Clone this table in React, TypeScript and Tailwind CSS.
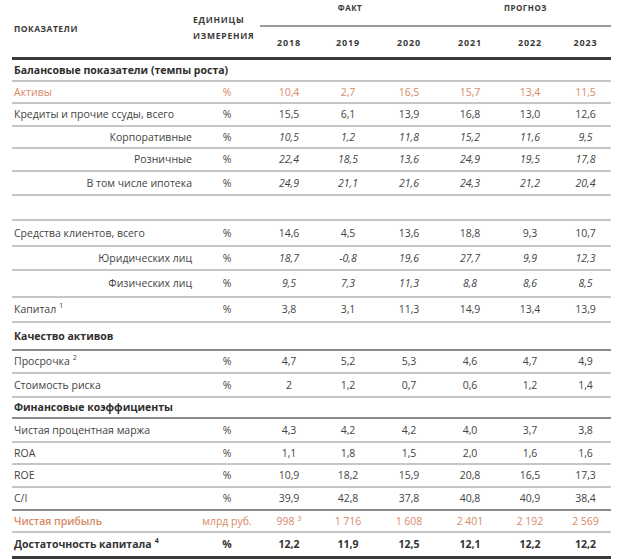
import React from 'react';

type Kind = 'section' | 'main' | 'sub' | 'accent' | 'accentBold' | 'bold' | 'blank';

type Row = {
  label?: string;
  sup?: string;
  unit?: string;
  vals?: React.ReactNode[];
  kind: Kind;
  h: string;
  dark?: boolean;
};

const grid = 'grid grid-cols-[182px_66px_58px_60px_62px_60px_60px_51px]';

const rows: Row[] = [
  { label: 'Балансовые показатели (темпы роста)', kind: 'section', h: 'h-[22px]' },
  { label: 'Активы', unit: '%', vals: ['10,4', '2,7', '16,5', '15,7', '13,4', '11,5'], kind: 'accent', h: 'h-[22px]' },
  { label: 'Кредиты и прочие ссуды, всего', unit: '%', vals: ['15,5', '6,1', '13,9', '16,8', '13,0', '12,6'], kind: 'main', h: 'h-[23px]' },
  { label: 'Корпоративные', unit: '%', vals: ['10,5', '1,2', '11,8', '15,2', '11,6', '9,5'], kind: 'sub', h: 'h-[22px]' },
  { label: 'Розничные', unit: '%', vals: ['22,4', '18,5', '13,6', '24,9', '19,5', '17,8'], kind: 'sub', h: 'h-[23px]' },
  { label: 'В том числе ипотека', unit: '%', vals: ['24,9', '21,1', '21,6', '24,3', '21,2', '20,4'], kind: 'sub', h: 'h-[24px]' },
  { kind: 'blank', h: 'h-[25px]' },
  { label: 'Средства клиентов, всего', unit: '%', vals: ['14,6', '4,5', '13,6', '18,8', '9,3', '10,7'], kind: 'main', h: 'h-[26px]' },
  { label: 'Юридических лиц', unit: '%', vals: ['18,7', '-0,8', '19,6', '27,7', '9,9', '12,3'], kind: 'sub', h: 'h-[24px]' },
  { label: 'Физических лиц', unit: '%', vals: ['9,5', '7,3', '11,3', '8,8', '8,6', '8,5'], kind: 'sub', h: 'h-[27px]' },
  { label: 'Капитал', sup: '1', unit: '%', vals: ['3,8', '3,1', '11,3', '14,9', '13,4', '13,9'], kind: 'main', h: 'h-[25px]' },
  { label: 'Качество активов', kind: 'section', h: 'h-[28px]', dark: true },
  { label: 'Просрочка', sup: '2', unit: '%', vals: ['4,7', '5,2', '5,3', '4,6', '4,7', '4,9'], kind: 'main', h: 'h-[23px]' },
  { label: 'Стоимость риска', unit: '%', vals: ['2', '1,2', '0,7', '0,6', '1,2', '1,4'], kind: 'main', h: 'h-[24px]' },
  { label: 'Финансовые коэффициенты', kind: 'section', h: 'h-[21px]', dark: true },
  { label: 'Чистая процентная маржа', unit: '%', vals: ['4,3', '4,2', '4,2', '4,0', '3,7', '3,8'], kind: 'main', h: 'h-[24px]' },
  { label: 'ROA', unit: '%', vals: ['1,1', '1,8', '1,5', '2,0', '1,6', '1,6'], kind: 'main', h: 'h-[22px]' },
  { label: 'ROE', unit: '%', vals: ['10,9', '18,2', '15,9', '20,8', '16,5', '17,3'], kind: 'main', h: 'h-[23px]' },
  { label: 'C/I', unit: '%', vals: ['39,9', '42,8', '37,8', '40,8', '40,9', '38,4'], kind: 'main', h: 'h-[23px]', dark: true },
  {
    label: 'Чистая прибыль',
    unit: 'млрд руб.',
    vals: [
      <span>
        998<sup className="ml-[3px] text-[7px]">3</sup>
      </span>,
      '1 716',
      '1 608',
      '2 401',
      '2 192',
      '2 569',
    ],
    kind: 'accentBold',
    h: 'h-[22px]',
  },
];

function Label({ row }: { row: Row }) {
  const base = 'flex items-center';
  if (row.kind === 'section') {
    return <div className={`${base} col-span-8 pl-[2px] font-bold text-[#2e2e2e]`}>{row.label}</div>;
  }
  const align = row.kind === 'sub' ? 'justify-end pr-[2px]' : 'pl-[2px]';
  const color =
    row.kind === 'accent' ? 'text-[#d98866]' : row.kind === 'accentBold' ? 'text-[#d98866] font-semibold' : '';
  return (
    <div className={`${base} ${align} ${color}`}>
      {row.label}
      {row.sup && <sup className="ml-[3px] text-[7px]">{row.sup}</sup>}
    </div>
  );
}

function TableRow({ row }: { row: Row }) {
  const border = row.dark ? 'border-[#8c8c8c]' : 'border-[#c6c6c6]';
  if (row.kind === 'blank') {
    return <div className={`${row.h} border-b-2 ${border}`} />;
  }
  const accent = row.kind === 'accent' || row.kind === 'accentBold';
  return (
    <div className={`${grid} ${row.h} border-b-2 ${border} ${accent ? 'text-[#d98866]' : ''}`}>
      <Label row={row} />
      {row.kind !== 'section' && (
        <>
          <div className="flex items-center justify-center">{row.unit}</div>
          {row.vals?.map((v, i) => (
            <div key={i} className={`flex items-center justify-center ${row.kind === 'sub' ? 'italic' : ''}`}>
              {v}
            </div>
          ))}
        </>
      )}
    </div>
  );
}

export default function App() {
  const years = ['2018', '2019', '2020', '2021', '2022', '2023'];
  return (
    <div className="min-h-screen bg-white pl-[12px] font-['Open_Sans','Noto_Sans',sans-serif] text-[10.5px] leading-none text-[#444]">
      <div className="w-[599px]">
        <div className={`${grid} grid-rows-[27px_30px] border-b-[3px] border-[#3a3a3a] text-[8px] font-bold tracking-[0.06em] text-[#3a3a3a]`}>
          <div className="row-span-2 flex items-center pl-[2px] pt-[1px] text-[8.5px]">ПОКАЗАТЕЛИ</div>
          <div className="row-span-2 -ml-[1px] flex flex-col justify-center gap-[8px] pb-[1px] text-[8.5px] tracking-[0.09em]">
            <span>ЕДИНИЦЫ</span>
            <span>ИЗМЕРЕНИЯ</span>
          </div>
          <div className="col-span-3 flex items-start justify-center pt-[4px] border-b-2 border-[#9a9a9a]">ФАКТ</div>
          <div className="col-span-3 flex items-start justify-center pt-[4px] border-b-2 border-[#9a9a9a]">ПРОГНОЗ</div>
          {years.map((y) => (
            <div key={y} className="flex items-center justify-center text-[9px] tracking-[0.1em]">
              {y}
            </div>
          ))}
        </div>
        {rows.map((r, i) => (
          <TableRow key={i} row={r} />
        ))}
        <div className={`${grid} h-[26px] border-b-[3px] border-[#3a3a3a] font-bold text-[#333]`}>
          <div className="flex items-center pl-[2px]">
            Достаточность капитала<sup className="ml-[3px] text-[7px]">4</sup>
          </div>
          <div className="flex items-center justify-center">%</div>
          {['12,2', '11,9', '12,5', '12,1', '12,2', '12,2'].map((v, i) => (
            <div key={i} className="flex items-center justify-center">
              {v}
            </div>
          ))}
        </div>
      </div>
    </div>
  );
}
